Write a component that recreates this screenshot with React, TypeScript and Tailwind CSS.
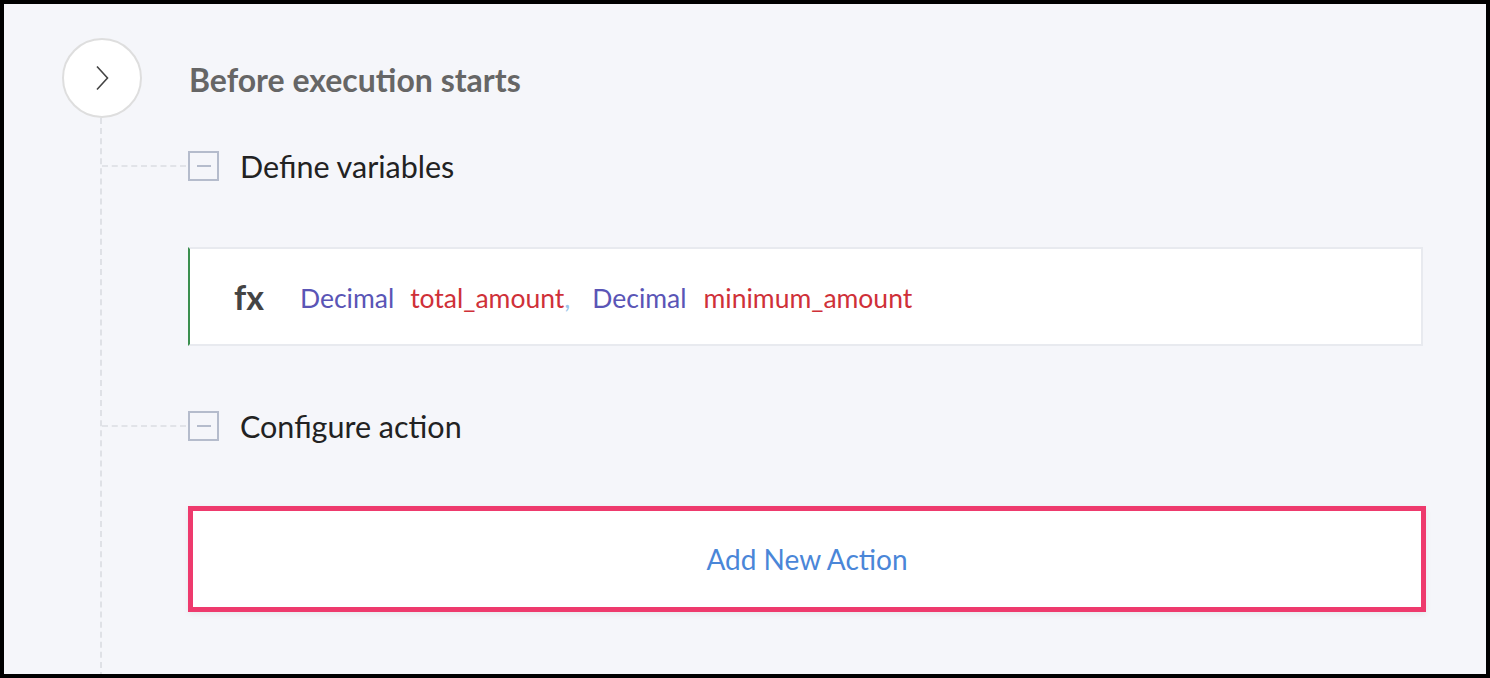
import React from "react";

/**
 * Section header with a dashed connector, a collapse box and a label
 */
const SectionHeader: React.FC<{ label: string }> = ({ label }) => (
  <div className="flex items-center h-[30px]">
    <span className="w-[84px] mr-[2px] border-t-2 border-dashed border-[#e1e3e8]" />
    <span className="w-[31px] h-[30px] border-2 border-[#b5bccc] flex items-center justify-center shrink-0">
      <span className="w-[14px] h-[2px] bg-[#b5bccc]" />
    </span>
    <span className="ml-[21px] text-[30.5px] leading-none text-[#222]">{label}</span>
  </div>
);

const App: React.FC = () => {
  return (
    <div
      className="w-[1490px] h-[678px] bg-black p-[4px]"
      style={{ fontFamily: "Lato, 'Open Sans', sans-serif" }}
    >
      <div className="w-full h-full bg-[#f5f6fa] overflow-hidden pt-[34px] pl-[58px]">
        {/* Stage header */}
        <div className="flex items-center">
          <div className="w-[80px] h-[80px] rounded-full bg-white border-2 border-[#dedede] flex items-center justify-center shrink-0">
            <svg width="14" height="26" viewBox="0 0 14 26" fill="none">
              <path d="M2 1.5 L12.5 13 L2 24.5" stroke="#444" strokeWidth="1.6" />
            </svg>
          </div>
          <h2 className="ml-[47px] text-[32px] font-bold text-[#666] leading-none mt-[4px]">
            Before execution starts
          </h2>
        </div>

        {/* Tree body */}
        <div className="ml-[38px] h-[560px] border-l-2 border-dashed border-[#dfe1e6] pt-[33px]">
          <SectionHeader label="Define variables" />

          <div className="ml-[86px] mt-[66px] w-[1235px] h-[99px] bg-white border-2 border-[#e8eaef] border-l-2 border-l-[#3b8f4f] flex items-center pl-[44px] pt-[4px] text-[26.5px]">
            <span className="text-[34px] font-bold text-[#444] leading-none mb-[4px]">fx</span>
            <span className="ml-[36px] text-[#5a55b6]">Decimal</span>
            <span className="ml-[16px] text-[#cf3038]">total_amount</span>
            <span className="text-[#9cc4ea]">,</span>
            <span className="ml-[22px] text-[#5a55b6]">Decimal</span>
            <span className="ml-[17px] text-[#cf3038]">minimum_amount</span>
          </div>

          <div className="mt-[65px]">
            <SectionHeader label="Configure action" />
          </div>

          <div className="ml-[86px] mt-[65px] w-[1238px] h-[106px] bg-white border-[5px] border-[#ee3a6d] shadow-[0_2px_6px_rgba(0,0,0,0.06)] flex items-center justify-center">
            <span className="text-[28px] text-[#4a86d8]">Add New Action</span>
          </div>
        </div>
      </div>
    </div>
  );
};

export default App;
